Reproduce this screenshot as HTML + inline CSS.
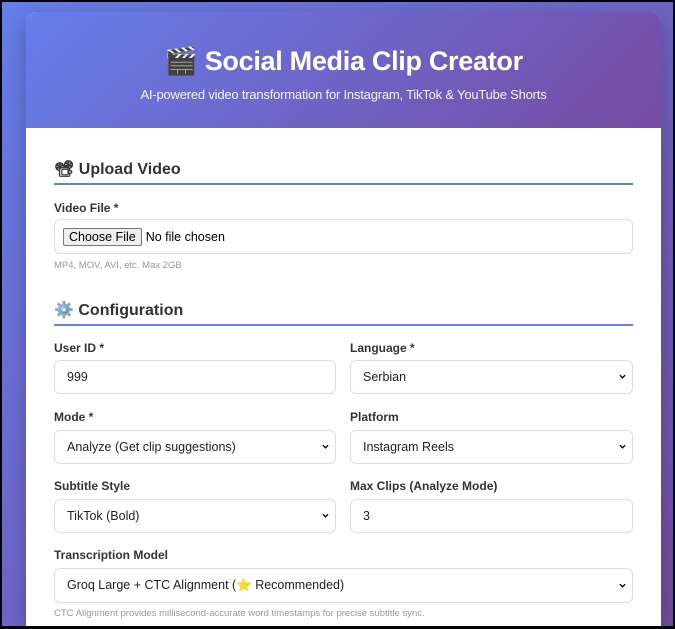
<!DOCTYPE html>
<html><head><meta charset="utf-8"><style>
*{box-sizing:border-box;margin:0;padding:0}
html,body{width:675px;height:629px;overflow:hidden;background:#000}
.bg{position:absolute;left:2px;top:2px;width:671px;height:624px;background:linear-gradient(135deg,#667eea,#764ba2);overflow:hidden}
.card{position:absolute;left:24px;top:10px;width:635px;height:614px;background:#fff;border-radius:10px 10px 0 0;overflow:hidden;box-shadow:0 8px 24px rgba(0,0,0,.25)}
.hdr{position:absolute;left:0;top:0;width:635px;height:116px;background:linear-gradient(135deg,#667eea,#764ba2);color:#fff;text-align:center;font-family:"Liberation Sans",sans-serif}
.h1{position:absolute;left:0;right:0;top:33px;font-size:27px;font-weight:bold;letter-spacing:-0.3px}
.sub{position:absolute;left:0;right:0;top:75px;font-size:13px;opacity:.92;letter-spacing:-0.2px}
.t{position:absolute;font-family:"Liberation Sans",sans-serif;color:#333;white-space:nowrap}
.sec{font-size:16px;font-weight:bold;color:#333}
.line{position:absolute;left:28px;width:579px;height:2px;background:#667eea}
.lab{font-size:12px;font-weight:bold;color:#333}
.box{position:absolute;border:1px solid #ddd;border-radius:6px;background:#fff;font-family:"Liberation Sans",sans-serif;font-size:12.5px;color:#222;padding-left:12px;display:flex;align-items:center}
.hint{font-size:9.5px;color:#999}
.chev{position:absolute;right:6px;top:50%;margin-top:-4px;width:7px;height:7px}
</style></head><body>
<div class="bg"><div class="card">
<div class="hdr"><div class="h1">🎬 Social Media Clip Creator</div><div class="sub">AI-powered video transformation for Instagram, TikTok &amp; YouTube Shorts</div></div>

<div class="t sec" style="left:28px;top:147px">📽 Upload Video</div>
<div class="line" style="top:171px"></div>
<div class="t lab" style="left:28px;top:189px">Video File *</div>
<div class="box" style="left:28px;top:207px;width:579px;height:35px;padding-left:8px"><span style="border:1px solid #767676;background:#efefef;border-radius:2px;padding:1px 5px;font-size:12.5px;color:#000">Choose File</span><span style="margin-left:4px;color:#000">No file chosen</span></div>
<div class="t hint" style="left:28px;top:248px">MP4, MOV, AVI, etc. Max 2GB</div>

<div class="t sec" style="left:28px;top:288px">⚙️ Configuration</div>
<div class="line" style="top:312px"></div>

<div class="t lab" style="left:28px;top:329px">User ID *</div>
<div class="t lab" style="left:324px;top:329px">Language *</div>
<div class="box" style="left:28px;top:348px;width:282px;height:34px">999</div>
<div class="box" style="left:324px;top:348px;width:283px;height:34px">Serbian<svg class="chev" viewBox="0 0 8 8"><path d="M1 2.5L4 5.5 7 2.5" stroke="#000" stroke-width="1.6" fill="none"/></svg></div>

<div class="t lab" style="left:28px;top:398px">Mode *</div>
<div class="t lab" style="left:324px;top:398px">Platform</div>
<div class="box" style="left:28px;top:418px;width:282px;height:34px">Analyze (Get clip suggestions)<svg class="chev" viewBox="0 0 8 8"><path d="M1 2.5L4 5.5 7 2.5" stroke="#000" stroke-width="1.6" fill="none"/></svg></div>
<div class="box" style="left:324px;top:418px;width:283px;height:34px">Instagram Reels<svg class="chev" viewBox="0 0 8 8"><path d="M1 2.5L4 5.5 7 2.5" stroke="#000" stroke-width="1.6" fill="none"/></svg></div>

<div class="t lab" style="left:28px;top:467px">Subtitle Style</div>
<div class="t lab" style="left:324px;top:467px">Max Clips (Analyze Mode)</div>
<div class="box" style="left:28px;top:487px;width:282px;height:34px">TikTok (Bold)<svg class="chev" viewBox="0 0 8 8"><path d="M1 2.5L4 5.5 7 2.5" stroke="#000" stroke-width="1.6" fill="none"/></svg></div>
<div class="box" style="left:324px;top:487px;width:283px;height:34px">3</div>

<div class="t lab" style="left:28px;top:536px">Transcription Model</div>
<div class="box" style="left:28px;top:556px;width:579px;height:35px">Groq Large + CTC Alignment (⭐ Recommended)<svg class="chev" viewBox="0 0 8 8"><path d="M1 2.5L4 5.5 7 2.5" stroke="#000" stroke-width="1.6" fill="none"/></svg></div>
<div class="t hint" style="left:28px;top:596px">CTC Alignment provides millisecond-accurate word timestamps for precise subtitle sync.</div>
</div></div>
</body></html>
